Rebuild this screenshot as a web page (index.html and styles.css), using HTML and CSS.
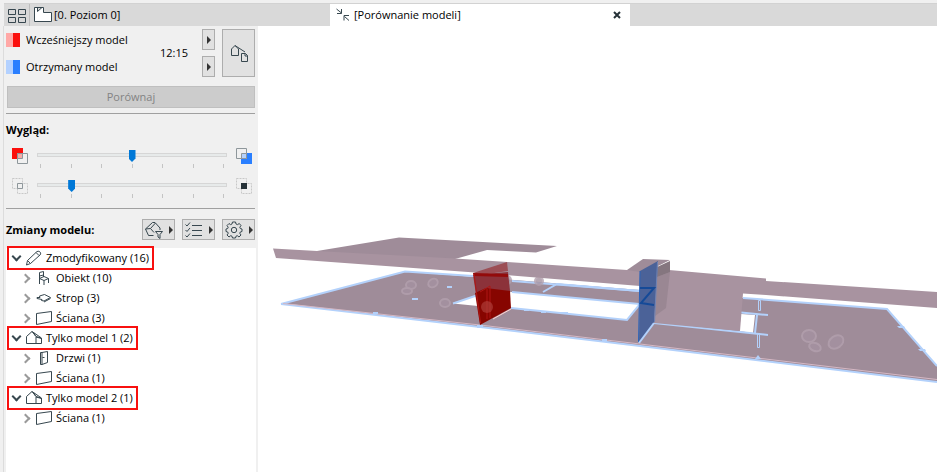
FILE: index.html
```html
<!DOCTYPE html>
<html lang="pl">
<head>
<meta charset="utf-8">
<title>Porównanie modeli</title>
<link rel="stylesheet" href="styles.css">
</head>
<body>
<svg class="defs" aria-hidden="true">
    <symbol id="wall" viewBox="0 0 18 16"><path d="M1.500 3.500L16.500 1.500V11.500L1.500 14.500Z"/></symbol>
    <symbol id="house" viewBox="0 0 18 16"><path d="M1.500 13.500V6.500L7 1.500L11 6.500V13.500ZM7 1.500L16.500 8V13.500H11M11 7L16.500 8.500M9 2.800L10.500 6M11 6.500L16 8"/></symbol>
</svg>
<nav class="tabs">
    <button class="tab-grid" aria-label="Karty">
        <svg width="18" height="14" viewBox="0 0 18 14"><path d="M.5.5h7v5h-7zM10.500.5h7v5h-7zM.5 8.500h7v5h-7zM10.500 8.500h7v5h-7z"/></svg>
    </button>
    <a class="tab" href="#poziom">
        <svg width="20" height="18" viewBox="0 0 20 18"><path d="M1.500 1.500H10.500V6.500H18.500V15.500H1.500ZM4.500 1.500V5.500L9 1.500" fill="#fff"/></svg>
        <span>[0. Poziom 0]</span>
    </a>
    <div class="tab active">
        <svg width="16" height="14" viewBox="0 0 16 14"><path d="M.5 1L5.500 5M5.500 1V5.500H1M13 12.500L8.500 8.500M8 12.500V7.500H13"/></svg>
        <span>[Porównanie modeli]</span>
        <button class="close" aria-label="Zamknij"><svg width="8" height="8" viewBox="0 0 8 8"><path d="M1 1L7 7M7 1L1 7"/></svg></button>
    </div>
</nav>
<div class="workspace">
    <aside class="panel">
        <section class="models">
            <div class="names">
                <p><i class="swatch red"></i>Wcześniejszy model</p>
                <p><i class="swatch blue"></i>Otrzymany model</p>
            </div>
            <time>12:15</time>
            <div class="pickers">
                <button class="btn" aria-label="Wybierz wcześniejszy model"><i class="arrow"></i></button>
                <button class="btn" aria-label="Wybierz otrzymany model"><i class="arrow"></i></button>
            </div>
            <button class="btn swap" aria-label="Modele">
                <svg width="18" height="18" viewBox="0 0 18 18"><path d="M8.500 11.500H1.500V5L5 1.500L8.500 5V11.500M5 1.500L15 8M11.500 9.500H15.500L17.500 11.500V17.500H11.500ZM15 9.500V12H17.500"/></svg>
            </button>
        </section>
        <button class="btn compare" disabled>Porównaj</button>

        <section class="look">
            <h2>Wygląd:</h2>
            <div class="slide">
                <svg width="16" height="16" viewBox="0 0 16 16"><path class="fill-red" d="M0 0h11v11H0z"/><path class="box" d="M5.500 5.500h10v10h-10z" fill="#f0f0f0"/><path class="box" d="M5.500 5.500h5v5h-5z" fill="#f6aaa6"/></svg>
                <div class="range">
                    <input type="range" min="0" max="6" value="3" aria-label="Udział modeli">
                    <div class="ticks"><i></i><i></i><i></i><i></i><i></i><i></i><i></i></div>
                </div>
                <svg width="16" height="16" viewBox="0 0 16 16"><path class="fill-blue" d="M5 5h11v11H5z"/><path class="box" d="M.5.5h10v10H.5z" fill="#f0f0f0"/><path class="box" d="M5.500 5.500h5v5h-5z" fill="#b4d1fc"/></svg>
            </div>
            <div class="slide">
                <svg width="16" height="16" viewBox="0 0 16 16"><path class="dash" d="M.5.5h10v10H.5zM5.500 5.500h10v10h-10z"/><path class="box" d="M5.500 5.500h5v5h-5z" fill="#f0f0f0"/></svg>
                <div class="range">
                    <input type="range" min="0" max="6" value="1" aria-label="Elementy niezmienione">
                    <div class="ticks"><i></i><i></i><i></i><i></i><i></i><i></i><i></i></div>
                </div>
                <svg width="16" height="16" viewBox="0 0 16 16"><path class="dash" d="M.5.5h10v10H.5zM5.500 5.500h10v10h-10z"/><path d="M5 5h6v6H5z" fill="#263238" stroke="none"/></svg>
            </div>
        </section>

        <section class="changes">
            <h2>Zmiany modelu:</h2>
            <button class="btn" aria-label="Filtr">
                <svg width="18" height="18" viewBox="0 0 18 18"><path d="M8.500 14.500H3.500L.5 8L7.500 1.500H10L15 7V9M.5 8L5.500 7.500L9 11.500M5.500 7.500L10.500 2M10.500 10.500H17.500L15 13.500V17.500L13 16V13.500Z"/></svg>
                <i class="arrow"></i>
            </button>
            <button class="btn" aria-label="Lista">
                <svg width="18" height="16" viewBox="0 0 18 16"><path d="M.5 2.500L2 4L5 .5M.5 8L2 9.500L5 6M.5 13.500L2 15L5 11.500M7 3.500H17M7 8.500H17M7 13.500H17"/></svg>
                <i class="arrow"></i>
            </button>
            <button class="btn" aria-label="Ustawienia">
                <svg width="18" height="18" viewBox="0 0 18 18"><path d="M7.500 1H10.500L11 3L12.500 3.600L14.300 2.500L16 4.600L14.800 6.200L15.300 7.500L17 8V10.500L15.300 11L14.800 12.300L16 14L14 16L12.300 14.700L11 15.200L10.500 17H7.500L7 15.200L5.700 14.700L4 16L2 14L3.200 12.300L2.700 11L1 10.500V8L2.700 7.500L3.200 6.200L2 4.600L4 2.500L5.500 3.600L7 3Z"/><circle cx="9" cy="9" r="2.700"/></svg>
                <i class="arrow"></i>
            </button>
        </section>

        <ul class="tree">
            <li>
                <button class="row marked" aria-expanded="true"><i class="chev"></i>
                    <svg width="18" height="16" viewBox="0 0 18 16"><path d="M1.500 15L2.500 10.500L12 1.500Q14 .5 15.500 2.500Q16 4 15 5L5.500 13.500ZM2.500 10.500L5.500 13.500M11 2.500L14 5.500"/></svg>
                    Zmodyfikowany (16)</button>
                <ul>
                    <li><button class="row" aria-expanded="false"><i class="chev"></i>
                        <svg width="18" height="16" viewBox="0 0 18 16"><path d="M4.500 14V2.500L8.500 1.500V7M4.500 8.500L9 10.500L13.500 8.500L9 6.500ZM9 10.500V15M13.500 8.500V13M4.500 6L8.500 5"/></svg>
                        Obiekt (10)</button></li>
                    <li><button class="row" aria-expanded="false"><i class="chev"></i>
                        <svg width="18" height="16" viewBox="0 0 18 16"><path d="M2 7.500H5L4.500 6L9.500 4.500L15.500 7.500L9 11L6.500 10.500L7 9.500L2 8.500ZM9 12L15.500 8.500"/></svg>
                        Strop (3)</button></li>
                    <li><button class="row" aria-expanded="false"><i class="chev"></i>
                        <svg width="18" height="16"><use href="#wall"/></svg>
                        Ściana (3)</button></li>
                </ul>
            </li>
            <li>
                <button class="row marked" aria-expanded="true"><i class="chev"></i>
                    <svg width="18" height="16"><use href="#house"/></svg>
                    Tylko model 1 (2)</button>
                <ul>
                    <li><button class="row" aria-expanded="false"><i class="chev"></i>
                        <svg width="18" height="16" viewBox="0 0 18 16"><path d="M5.500 2.500H7L12.500 1.500V12.500L7 14.500H5.500ZM7 2.500V14.500M7.500 7.500H9.500"/></svg>
                        Drzwi (1)</button></li>
                    <li><button class="row" aria-expanded="false"><i class="chev"></i>
                        <svg width="18" height="16"><use href="#wall"/></svg>
                        Ściana (1)</button></li>
                </ul>
            </li>
            <li>
                <button class="row marked" aria-expanded="true"><i class="chev"></i>
                    <svg width="18" height="16"><use href="#house"/></svg>
                    Tylko model 2 (1)</button>
                <ul>
                    <li><button class="row" aria-expanded="false"><i class="chev"></i>
                        <svg width="18" height="16"><use href="#wall"/></svg>
                        Ściana (1)</button></li>
                </ul>
            </li>
        </ul>
    </aside>
    <main class="view">
        <svg class="scene" viewBox="258 26 679 446" role="img" aria-label="Model budynku">
            <!-- floor slab with openings -->
            <path class="slab" fill-rule="evenodd" d="M281 304L405 271.500L640 290L743 298L887 309L937 366V382L640 346L480 327ZM453 303.500L478 295L512 292L640 304L627 320L560 313L511 308L478 306ZM741 314L755 315L753 333L739 331Z"/>
            <path class="glow" d="M281 304L405 271.500L473 276M512 281L640 291M743 298L887 309L937 366M281 304L480 327L640 346L937 382"/>
            <path class="glow" d="M453 303.500L478 295M512 292L640 304L627 320L560 313L511 308M543 292L557 284L640 291M654 323L768 335M741 312.500L768 315M757 315L755 333"/>
            <path class="seam" d="M283 303.500L480 325L640 344L937 379.500"/>
            <path class="post" d="M758.500 300.500h2v10h-2zM757.500 333.500h2v14h-2z"/>
            <path class="blot" d="M755 359L758 355L761 359ZM897 326H904L905 328H899ZM918 349H925L926 351H920ZM447 286h5v2h-5zM412 298h6v2h-6zM373 312h5v2h-5zM602 339h5v2h-5zM524 309h5v2h-5zM541 311h5v2h-5zM560 312h8v2h-8zM477 325h6v3h-6z"/>
            <g class="rings">
                <ellipse cx="411" cy="285" rx="5" ry="4"/>
                <ellipse cx="407" cy="291" rx="5" ry="3"/>
                <ellipse cx="433" cy="283" rx="5" ry="4" transform="rotate(-35 433 283)"/>
                <ellipse cx="445" cy="303" rx="5" ry="4"/>
                <ellipse cx="507" cy="280" rx="4" ry="4"/>
                <ellipse cx="539" cy="281" rx="4" ry="4"/>
                <ellipse cx="815" cy="347" rx="6" ry="4" transform="rotate(20 815 347)"/>
                <ellipse cx="809" cy="336" rx="7" ry="6"/>
                <ellipse cx="836" cy="342" rx="8" ry="6" transform="rotate(-35 836 342)"/>
            </g>
            <!-- roof and front beam -->
            <path class="roof" d="M317 251L399 237.500L557 246L536 252.500L487 250L455 259L475 268L317 256Z"/>
            <path class="beam" d="M273 248.500L317 251L455 258.500L627 270H669L766 278.500V281L937 292V308L766 295L743 293.500L740 331L654 323L640 286L475 272.500L276 258Z"/>
            <path class="roof" d="M627 270L643 259L670 260L658 266L640 272Z"/>
            <path class="side" d="M657 267L670 261V272L657 277Z"/>
            <path class="side" opacity=".4" d="M657 277L670 272L666 308L655 316Z"/>
            <!-- removed wall with a door -->
            <path fill="#9c4e55" d="M473 273L507 262L508 271L474 276Z"/>
            <path fill="#8c323a" d="M473 275L508 272L510 291L476 294Z"/>
            <path fill="#930b0b" d="M473 273L508 274V277L474 276Z"/>
            <path fill="#870500" d="M475 293L486 288L510 291L511 308L480 325Z"/>
            <path stroke="#ae1614" fill="none" d="M474 274L480.500 323M480 292L490 286V318M487 289V319"/>
            <ellipse cx="487" cy="307" rx="6" ry="6" fill="#b2443f" opacity=".6"/>
            <path stroke="#ffd1ce" fill="none" d="M493 319L511 309"/>
            <!-- added wall -->
            <path fill="#4b6298" d="M640 271L658 261L654 323L639 343Z"/>
            <path stroke="#6f83b4" fill="none" d="M657.500 262L654.500 322"/>
            <path stroke="#2a62b8" fill="none" d="M640 271L638.500 342"/>
            <path stroke="#154a98" stroke-width="2" fill="none" d="M640 288H654L641 303L654 305"/>
            <path class="glow" d="M639 343L654 323"/>
        </svg>
    </main>
</div>
</body>
</html>
```

FILE: styles.css
```css
* {
    box-sizing: border-box;
}
body {
    margin: 0;
    padding-top: 3px;
    min-height: 100vh;
    display: flex;
    flex-direction: column;
    background-color: #f0f0f0;
    color: #000;
    font: 11px/16px "Open Sans", "Noto Sans", sans-serif;
}
button {
    margin: 0;
    padding: 0;
    border: 0;
    background: none;
    font: inherit;
    color: inherit;
}
svg {
    display: block;
    flex: none;
    fill: none;
    stroke: #37474f;
}
ul, p, h2 {
    margin: 0;
    padding: 0;
    list-style: none;
}
h2 {
    font-size: 11px;
    font-weight: 700;
}
.defs {
    position: absolute;
    width: 0;
    height: 0;
}

/* tabs */
.tabs {
    display: flex;
    height: 23px;
    margin-left: 4px;
    background-color: #d9d9d9;
    border-top: 1px solid #d2d2d2;
}
.tab-grid {
    width: 26px;
    padding: 1px 0 0 4px;
    border-right: 1px solid #bdbdbd;
}
.tab {
    display: flex;
    align-items: center;
    flex: 0 1 300px;
    gap: 1px;
    padding-left: 3px;
    color: #000;
    text-decoration: none;
}
.tab.active {
    gap: 2px;
    padding: 0 9px 0 6px;
    background-color: #fff;
}
.close {
    margin-left: auto;
}
.close svg {
    stroke: #263238;
    stroke-width: 2;
}

/* side panel */
.workspace {
    display: flex;
    flex: 1;
}
.panel {
    display: flex;
    flex-direction: column;
    width: 255px;
    margin-left: 3px;
    padding: 0 2px 0 2px;
    border-left: 1px solid #dcdcdc;
}
.btn {
    display: flex;
    align-items: center;
    justify-content: center;
    height: 21px;
    border: 1px solid #adadad;
    background-color: #e1e1e1;
}
.arrow {
    border: 4px solid transparent;
    border-left: 4px solid #333;
    border-right: 0;
}
.models {
    display: flex;
    align-items: center;
    padding-right: 1px;
}
.names {
    flex: 1;
}
.names p {
    display: flex;
    align-items: center;
    height: 27px;
}
.swatch {
    width: 14px;
    height: 14px;
    margin-right: 6px;
}
.swatch.red {
    background: linear-gradient(90deg, #ffa8a6 50%, #fb0f0c 50%);
}
.swatch.blue {
    background: linear-gradient(90deg, #b3d1ff 50%, #2a7fff 50%);
}
.pickers {
    display: grid;
    gap: 6px;
    margin: 0 7px 0 14px;
}
.pickers .btn {
    width: 13px;
}
.swap {
    width: 33px;
    height: 48px;
}
.compare {
    margin: 6px 1px 5px;
    height: 22px;
    border-color: #bfbfbf;
    background-color: #ccc;
    color: #838383;
}
.look {
    padding-top: 8px;
    margin-right: 1px;
    border-top: 1px solid #a0a0a0;
    border-bottom: 1px solid #a0a0a0;
}
.slide {
    display: flex;
    justify-content: space-between;
    height: 30px;
    padding: 0 3px 0 6px;
}
.look h2 {
    margin-bottom: 10px;
}
.range {
    flex: 1;
    margin: 0 9px;
}
.range input {
    display: block;
    width: 100%;
    height: 14px;
    margin: 0;
    appearance: none;
    background: none;
}
.range input::-webkit-slider-runnable-track {
    height: 4px;
    border: 1px solid #d6d6d6;
    background-color: #e7eaea;
}
.range input::-webkit-slider-thumb {
    appearance: none;
    width: 7px;
    height: 12px;
    margin-top: -4px;
    background-color: #0078d7;
    clip-path: polygon(0 0, 100% 0, 100% 70%, 50% 100%, 0 70%);
}
.ticks {
    display: flex;
    justify-content: space-between;
    margin: 2px 3px 0;
}
.ticks i {
    width: 1px;
    height: 4px;
    background-color: #c4c4c4;
}
.changes {
    display: flex;
    align-items: center;
    gap: 7px;
    padding: 10px 1px 8px 0;
}
.changes h2 {
    flex: 1;
}
.changes .btn {
    width: 33px;
    gap: 6px;
}

/* change list */
.tree {
    flex: 1;
    background-color: #fff;
}
.row {
    position: relative;
    display: flex;
    align-items: center;
    height: 20px;
    padding: 0 6px;
    gap: 3px;
}
.tree ul .row {
    padding-left: 15px;
}
.chev {
    width: 7px;
    height: 7px;
    margin: 0 2px 4px 1px;
    border: solid #37474f;
    border-width: 0 2px 2px 0;
    transform: rotate(45deg);
}
.tree ul .chev {
    margin: 0 3px 0 1px;
    border-color: #9a9a9a;
    transform: rotate(-45deg);
}
.marked::after {
    content: "";
    position: absolute;
    inset: -2px 1px;
    border: 2px solid #f8100f;
}

/* 3D view */
.view {
    flex: 1;
    background-color: #fff;
}
.scene {
    width: 100%;
    stroke: none;
}
.slab, .roof {
    fill: #9f8c99;
}
.beam {
    fill: #a893a0;
}
.side {
    fill: #85767f;
}
.glow {
    fill: none;
    stroke: #b3d1fb;
    stroke-width: 2;
}
.seam {
    fill: none;
    stroke: #d5b8c4;
}
.post {
    stroke: #b3d1fb;
}
.blot {
    fill: #b3d1fb;
}
.rings {
    fill: #a491a0;
    stroke: #b3a1ae;
    stroke-width: 2;
    opacity: .8;
}
.fill-red {
    fill: #fb0f0c;
    stroke: none;
}
.fill-blue {
    fill: #2a7fff;
    stroke: none;
}
.box {
    stroke: #8e979b;
}
.dash {
    stroke: #c8c8c8;
    stroke-dasharray: 2 1;
}
```
